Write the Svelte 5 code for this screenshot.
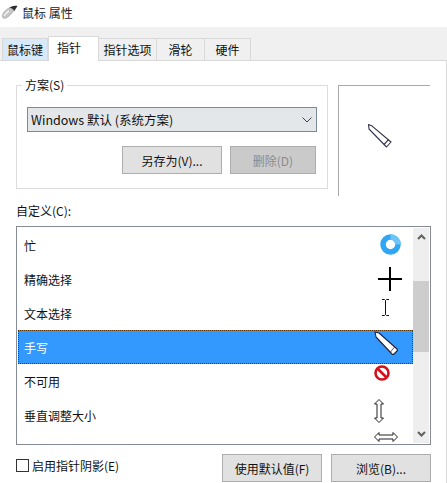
<script>
  const tabs = [
    { label: '鼠标键', cls: 'hover' },
    { label: '指针', cls: 'active' },
    { label: '指针选项', cls: '' },
    { label: '滑轮', cls: '' },
    { label: '硬件', cls: '' }
  ];
  const rows = [
    { label: '忙', icon: 'busy' },
    { label: '精确选择', icon: 'cross' },
    { label: '文本选择', icon: 'text' },
    { label: '手写', icon: 'pen', selected: true },
    { label: '不可用', icon: 'no' },
    { label: '垂直调整大小', icon: 'vert' },
    { label: '', icon: 'horiz' }
  ];
</script>

<div class="window">
  <header class="title">
    <svg class="mouse" width="18" height="14" viewBox="0 0 18 14">
      <path d="M1.500 12 C.5 9.500 4 5 8 3 C11 1.800 13 3.500 12.500 5.500 C11 9 7 12.500 4 13.300 C2.800 13.600 2 13 1.500 12Z" fill="#c4c4c4" stroke="#9a9a9a" stroke-width=".6"/>
      <path d="M8 3.200 C10.500 .8 14 .2 16.500 1 L13 6.500 C13 4 10.500 2.700 8 3.200Z" fill="#2f2f2f"/>
      <path d="M3 11 C4 9 6 7 8 6" fill="none" stroke="#f4f4f4" stroke-width="1.500"/>
    </svg>
    <span>鼠标 属性</span>
  </header>

  <nav class="tabs">
    {#each tabs as t}
      <div class="tab {t.cls}">{t.label}</div>
    {/each}
  </nav>

  <main class="panel">
    <section class="top">
      <fieldset class="scheme">
        <legend>方案(S)</legend>
        <div class="select">
          <span>Windows 默认 (系统方案)</span>
          <svg width="10" height="6" viewBox="0 0 10 6"><path d="M.5 .5 5 5 9.500 .5" fill="none" stroke="#444" stroke-width="1"/></svg>
        </div>
        <div class="scheme-btns">
          <button class="btn save">另存为(V)...</button>
          <button class="btn del" disabled>删除(D)</button>
        </div>
      </fieldset>
      <div class="preview">
        <svg width="24" height="24" viewBox="0 0 24 24">
          <path d="M.5 .5 L3.500 1.700 L23 18 L18.500 23 L1 5 Z" fill="#fff" stroke="#33334a" stroke-width="1.100" stroke-linejoin="round"/>
          <path d="M20.500 15.700 L16 20.500" stroke="#33334a" stroke-width="1.100"/>
        </svg>
      </div>
    </section>

    <label class="custom-label" for="list">自定义(C):</label>
    <div class="list" id="list">
      <div class="rows">
        {#each rows as r}
          <div class="row" class:selected={r.selected}>
            <span>{r.label}</span>
            <span class="ico {r.icon}">
              {#if r.icon === 'busy'}
                <svg width="21" height="21" viewBox="0 0 21 21"><circle cx="10.500" cy="10.500" r="7.500" fill="none" stroke="#2ea6f5" stroke-width="5.500"/><path d="M10.500 3A7.500 7.500 0 0 1 18 10.500" fill="none" stroke="#6cc4f8" stroke-width="5.500"/></svg>
              {:else if r.icon === 'cross'}
                <svg width="24" height="24" viewBox="0 0 24 24"><path d="M0 12H24M12 0V24" stroke="#000" stroke-width="2"/></svg>
              {:else if r.icon === 'text'}
                <svg width="9" height="17" viewBox="0 0 9 17"><path d="M1 .5H3.500L4.500 1.500L5.500 .5H8M4.500 1.500V15.500M1 16.500H3.500L4.500 15.500L5.500 16.500H8" fill="none" stroke="#111" stroke-width="1"/></svg>
              {:else if r.icon === 'pen'}
                <svg width="24" height="24" viewBox="0 0 24 24"><path d="M1 1 L5 2 L23 18 Q24 19 23 20 L20 23 Q19 24 18 23 L2 6 Z" fill="#fff" stroke="#22223a" stroke-width="1.100" stroke-linejoin="round"/><path d="M20.500 16 L16.500 21" stroke="#33334a" stroke-width=".8"/></svg>
              {:else if r.icon === 'no'}
                <svg width="16" height="16" viewBox="0 0 16 16"><circle cx="8" cy="8" r="6.500" fill="#fff" stroke="#d3101c" stroke-width="2.600"/><path d="M3.500 3.500 12.500 12.500" stroke="#d3101c" stroke-width="2.600"/></svg>
              {:else if r.icon === 'vert'}
                <svg width="10" height="24" viewBox="0 0 10 24"><path d="M5 .5 9.500 5H7V19H9.500L5 23.500 .5 19H3V5H.5Z" fill="#fff" stroke="#222" stroke-width="1"/></svg>
              {:else}
                <svg width="24" height="10" viewBox="0 0 24 10"><path d="M.5 5 5 .5V3H19V.5L23.500 5 19 9.500V7H5V9.500Z" fill="#fff" stroke="#222" stroke-width="1"/></svg>
              {/if}
            </span>
          </div>
        {/each}
      </div>
      <div class="scrollbar">
        <svg width="9" height="6" viewBox="0 0 9 6"><path d="M1 5 4.500 1.500 8 5" fill="none" stroke="#606060" stroke-width="2"/></svg>
        <div class="thumb"></div>
        <svg width="9" height="6" viewBox="0 0 9 6"><path d="M1 1 4.500 4.500 8 1" fill="none" stroke="#606060" stroke-width="2"/></svg>
      </div>
    </div>

    <footer class="foot">
      <div class="check"><span class="box"></span><span>启用指针阴影(E)</span></div>
      <button class="btn def">使用默认值(F)</button>
      <button class="btn browse">浏览(B)...</button>
    </footer>
  </main>
</div>

<style>
  :global(body) {
    margin: 0;
    background: #fff;
  }
  .window {
    width: 447px;
    height: 483px;
    display: flex;
    flex-direction: column;
    overflow: hidden;
    background: #fff;
    font: 12px "Noto Sans CJK SC", "Liberation Sans", sans-serif;
    color: #111;
  }
  .title {
    height: 27px;
    flex: none;
    box-sizing: border-box;
    padding: 0 0 3px 1px;
    display: flex;
    align-items: center;
    gap: 3px;
    color: #222;
  }
  .mouse {
    flex: none;
  }
  .tabs {
    height: 34px;
    flex: none;
    background: #f0f0f0;
    display: flex;
    align-items: flex-end;
    padding-left: 2px;
    box-sizing: border-box;
    border-bottom: 1px solid #d9d9d9;
  }
  .tab {
    height: 22px;
    box-sizing: border-box;
    border: 1px solid #d9d9d9;
    border-bottom: 0;
    border-left: 0;
    display: flex;
    align-items: center;
    justify-content: center;
    background: #f0f0f0;
    width: 48px;
  }
  .tab:nth-child(1) { width: 46px; }
  .tab:nth-child(3) { width: 58px; }
  .tab:nth-child(5) { width: 46px; }
  .tab.hover {
    background: #d8eaf9;
    border-left: 1px solid #d9d9d9;
  }
  .tab.active {
    width: 51px;
    height: 25px;
    margin-bottom: -1px;
    background: #fff;
    justify-content: flex-start;
    padding: 0 0 4px 8px;
    position: relative;
    border-left: 1px solid #d9d9d9;
  }
  .panel {
    flex: 1;
    display: flex;
    flex-direction: column;
    padding: 0 15px 0 16px;
    min-height: 0;
    border-right: 1px solid #d9d9d9;
  }
  .top {
    display: flex;
    margin-top: 16px;
    height: 126px;
    gap: 10px;
    flex: none;
  }
  .scheme {
    width: 312px;
    height: 112px;
    margin: 0;
    padding: 0 10px;
    box-sizing: border-box;
    border: 1px solid #dcdcdc;
    flex: none;
  }
  .scheme legend {
    padding: 0 3px;
    margin-left: -5px;
    line-height: 16px;
  }
  .select {
    margin-top: 14px;
    height: 25px;
    box-sizing: border-box;
    border: 1px solid #7a8a99;
    background: #e3e7ea;
    display: flex;
    align-items: center;
    justify-content: space-between;
    padding: 0 4px 0 3px;
    font-size: 12.500px;
  }
  .scheme-btns {
    display: flex;
    justify-content: flex-end;
    gap: 8px;
    margin-top: 14px;
    padding-right: 1px;
  }
  .btn {
    height: 28px;
    box-sizing: border-box;
    border: 1px solid #adadad;
    background: #e1e1e1;
    font: inherit;
    color: #111;
    padding: 0;
  }
  .save { width: 100px; }
  .del {
    width: 86px;
    background: #cacaca;
    color: #8a8a8a;
  }
  .preview {
    flex: none;
    width: 92px;
    height: 111px;
    margin-top: 8px;
    box-sizing: border-box;
    border-top: 1px solid #a8a8a8;
    border-left: 1px solid #a8a8a8;
    display: flex;
    align-items: flex-start;
    padding: 38px 0 0 29px;
  }
  .custom-label {
    display: block;
    height: 16px;
    line-height: 16px;
    margin-bottom: 7px;
  }
  .list {
    height: 219px;
    box-sizing: border-box;
    border: 1px solid #858b94;
    padding: 1px 2px 1px 1px;
    display: flex;
    overflow: hidden;
    flex: none;
  }
  .rows {
    width: 395px;
    flex: none;
    overflow: hidden;
  }
  .row {
    height: 34px;
    box-sizing: border-box;
    padding: 0 0 0 6px;
    display: flex;
    align-items: center;
    position: relative;
  }
  .row.selected {
    background: #3399ff;
    color: #fff;
  }
  .row.selected::after {
    content: '';
    position: absolute;
    inset: 0;
    border: 1px dotted #5a3208;
  }
  .ico {
    position: absolute;
    display: flex;
    z-index: 1;
  }
  .ico.busy { left: 362px; top: 6px; }
  .ico.cross { left: 360px; top: 5px; }
  .ico.text { left: 363px; top: 3px; }
  .ico.pen { left: 356px; top: 1px; }
  .ico.no { left: 356px; top: 1px; }
  .ico.vert { left: 356px; top: 1px; }
  .ico.horiz { left: 356px; top: 0; }
  .scrollbar {
    width: 16px;
    flex: none;
    background: #eeeeee;
    display: flex;
    flex-direction: column;
    align-items: center;
    justify-content: space-between;
    padding: 6px 0;
    box-sizing: border-box;
    position: relative;
  }
  .thumb {
    position: absolute;
    left: 0;
    right: 0;
    top: 53px;
    height: 71px;
    background: #cdcdcd;
  }
  .foot {
    display: flex;
    align-items: flex-start;
    margin-top: 9px;
  }
  .check {
    display: flex;
    align-items: center;
    gap: 3px;
    width: 206px;
    margin-top: 3px;
  }
  .box {
    width: 13px;
    height: 13px;
    box-sizing: border-box;
    border: 1px solid #333;
    background: #fff;
  }
  .def { width: 100px; }
  .browse { width: 100px; margin-left: 9px; }
</style>
